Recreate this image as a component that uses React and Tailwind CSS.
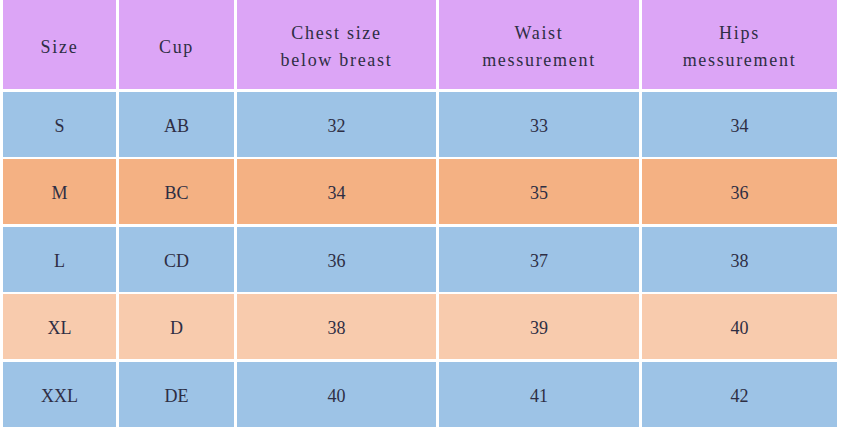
import React from "react";

const header = ["Size", "Cup", "Chest size\nbelow breast", "Waist\nmessurement", "Hips\nmessurement"];

const rows = [
  { bg: "bg-[#9dc3e6]", cells: ["S", "AB", "32", "33", "34"] },
  { bg: "bg-[#f4b183]", cells: ["M", "BC", "34", "35", "36"] },
  { bg: "bg-[#9dc3e6]", cells: ["L", "CD", "36", "37", "38"] },
  { bg: "bg-[#f8cbad]", cells: ["XL", "D", "38", "39", "40"] },
  { bg: "bg-[#9dc3e6]", cells: ["XXL", "DE", "40", "41", "42"] },
];

export default function App() {
  return (
    <div className="w-[841px] h-[429px] bg-white pl-[3px] font-['Liberation_Serif',serif] text-[#2e2e44]">
      <div className="grid grid-cols-[113px_115px_199px_200px_195px] grid-rows-[89px_65px_65px_65px_65px_65px] gap-x-[3px] gap-y-[2.5px]">
        {header.map((h) => (
          <div
            key={h}
            className="bg-[#dca5f6] flex items-center justify-center pt-[5px] text-center whitespace-pre-line text-[18px] leading-[27px] tracking-[1.7px]"
          >
            {h}
          </div>
        ))}
        {rows.map((row) =>
          row.cells.map((c, i) => (
            <div
              key={row.cells[0] + i}
              className={`${row.bg} flex items-center justify-center pt-[4px] text-[18px]`}
            >
              {c}
            </div>
          ))
        )}
      </div>
    </div>
  );
}
